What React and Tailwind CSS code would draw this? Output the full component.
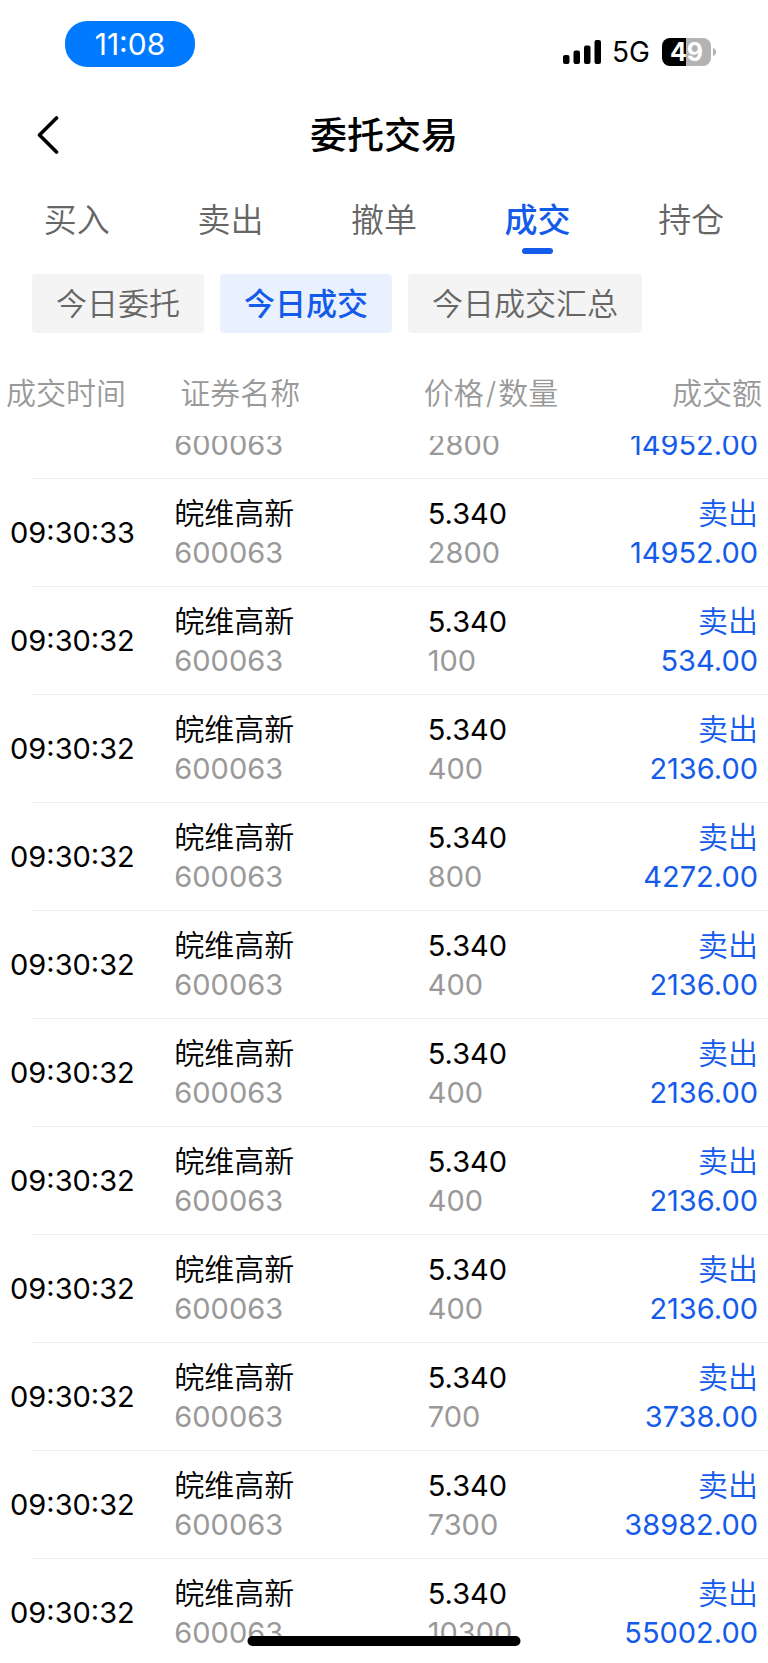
import React from "react";

const tabs = ["买入", "卖出", "撤单", "成交", "持仓"];
const filters = ["今日委托", "今日成交", "今日成交汇总"];

const trades = [
  { time: "09:30:33", qty: "2800", amount: "14952.00" },
  { time: "09:30:32", qty: "100", amount: "534.00" },
  { time: "09:30:32", qty: "400", amount: "2136.00" },
  { time: "09:30:32", qty: "800", amount: "4272.00" },
  { time: "09:30:32", qty: "400", amount: "2136.00" },
  { time: "09:30:32", qty: "400", amount: "2136.00" },
  { time: "09:30:32", qty: "400", amount: "2136.00" },
  { time: "09:30:32", qty: "400", amount: "2136.00" },
  { time: "09:30:32", qty: "700", amount: "3738.00" },
  { time: "09:30:32", qty: "7300", amount: "38982.00" },
  { time: "09:30:32", qty: "10300", amount: "55002.00" },
];

function StatusBar() {
  return (
    <div className="flex h-[88px] shrink-0 items-start justify-between pt-[21px] pr-[52px] pl-[65px]">
      <div className="flex h-[46px] w-[130px] items-center justify-center rounded-[22px] bg-[#007aff] text-[30px] text-white">
        11:08
      </div>
      <div className="flex h-[62px] items-center">
        <svg className="h-6 w-[39px]" viewBox="0 0 39 24" aria-hidden="true">
          <rect x="0" y="15" width="6.5" height="9" rx="2" />
          <rect x="10.5" y="10.5" width="6.5" height="13.5" rx="2" />
          <rect x="21" y="5.500" width="6.5" height="18.5" rx="2" />
          <rect x="31.5" y="0" width="6.5" height="24" rx="2" />
        </svg>
        <span className="ml-2.5 text-[28px] leading-7">5G</span>
        <div className="ml-3 flex h-7 w-[49px] items-center justify-center rounded-lg bg-linear-to-r from-black from-50% to-[#b3b3b3] to-50% text-[25px] leading-7 font-bold text-white">
          49
        </div>
        <svg className="ml-0.5 h-2 w-[3px]" viewBox="0 0 3 8" aria-hidden="true">
          <path d="M0 0C4 1 4 7 0 8Z" fill="#b3b3b3" />
        </svg>
      </div>
    </div>
  );
}

function TitleBar() {
  return (
    <header className="grid h-24 shrink-0 grid-cols-[1fr_auto_1fr] items-center">
      <button type="button" aria-label="返回" className="ml-9 w-6">
        <svg className="h-10 w-6" viewBox="0 0 24 40" fill="none" stroke="#000" strokeWidth="3.6" strokeLinecap="round" strokeLinejoin="round">
          <path d="M20.500 2L3.500 19L20.500 36" />
        </svg>
      </button>
      <h1 className="text-[37px] leading-10 font-medium">委托交易</h1>
    </header>
  );
}

function TradeRow({ trade }) {
  return (
    <tr className="h-[108px]">
      <td className="relative pl-2.5 after:absolute after:right-0 after:bottom-0 after:left-8 after:h-px after:bg-[#f0f0f0]">
        {trade.time}
      </td>
      <td className="border-b border-[#f0f0f0]">
        <div className="text-[30px] leading-[39px] font-[350]">皖维高新</div>
        <div className="leading-[39px] text-[#999]">600063</div>
      </td>
      <td className="border-b border-[#f0f0f0]">
        <div className="leading-[39px]">5.340</div>
        <div className="leading-[39px] text-[#999]">{trade.qty}</div>
      </td>
      <td className="border-b border-[#f0f0f0] pr-2.5 text-right text-[#155bea]">
        <div className="text-[30px] leading-[39px] font-[350]">卖出</div>
        <div className="leading-[39px]">{trade.amount}</div>
      </td>
    </tr>
  );
}

function ClippedCell({ className, children }) {
  return (
    <td className={className}>
      <div className="flex h-[42px] flex-col justify-end overflow-hidden pb-[14px]">
        <span className="leading-[39px]">{children}</span>
      </div>
    </td>
  );
}

function TradeTable() {
  return (
    <table className="w-full table-fixed text-left text-[29px]">
      <colgroup>
        <col className="w-[22.7%]" />
        <col className="w-[33%]" />
        <col className="w-[22%]" />
        <col className="w-[22.3%]" />
      </colgroup>
      <thead>
        <tr className="h-[86px] text-[30px] text-[#999]">
          <th scope="col" className="pl-1.5 font-[350]">成交时间</th>
          <th scope="col" className="pl-1.5 font-[350]">证券名称</th>
          <th scope="col" className="font-[350]">
            <div className="-ml-1">
              价格<span className="mx-0.5">/</span>数量
            </div>
          </th>
          <th scope="col" className="pr-1.5 text-right font-[350]">成交额</th>
        </tr>
      </thead>
      <tbody>
        <tr>
          <td className="relative after:absolute after:right-0 after:bottom-0 after:left-8 after:h-px after:bg-[#f0f0f0]" />
          <ClippedCell className="border-b border-[#f0f0f0] text-[#999]">600063</ClippedCell>
          <ClippedCell className="border-b border-[#f0f0f0] text-[#999]">2800</ClippedCell>
          <ClippedCell className="border-b border-[#f0f0f0] pr-2.5 text-right text-[#155bea]">14952.00</ClippedCell>
        </tr>
        {trades.map((trade, i) => (
          <TradeRow key={i} trade={trade} />
        ))}
      </tbody>
    </table>
  );
}

export default function App() {
  const [tab, setTab] = React.useState("成交");
  const [filter, setFilter] = React.useState("今日成交");

  return (
    <div className="flex h-screen flex-col overflow-hidden bg-white font-['Inter','Noto_Sans_CJK_SC',sans-serif] text-black">
      <StatusBar />
      <TitleBar />
      <nav className="grid shrink-0 grid-cols-5">
        {tabs.map((name) => (
          <button
            key={name}
            type="button"
            onClick={() => setTab(name)}
            className={
              "flex h-[70px] flex-col items-center justify-between pt-4 text-[33px] leading-10 " +
              (name === tab ? "font-medium text-[#155bea]" : "font-[350] text-[#666]")
            }
          >
            {name}
            {name === tab && <span className="h-1.5 w-[31px] rounded-full bg-[#155bea]" />}
          </button>
        ))}
      </nav>
      <div className="mt-5 mb-[17px] flex shrink-0 gap-4 px-8">
        {filters.map((name) => (
          <button
            key={name}
            type="button"
            onClick={() => setFilter(name)}
            className={
              "h-[59px] rounded px-6 pt-0.5 text-[31px] " +
              (name === filter ? "bg-[#eaf1fe] font-medium text-[#155bea]" : "bg-[#f4f4f4] font-[350] text-[#666]")
            }
          >
            {name}
          </button>
        ))}
      </div>
      <main className="min-h-0 flex-1 overflow-hidden">
        <TradeTable />
      </main>
      <div className="fixed bottom-[17px] left-1/2 h-2.5 w-[273px] -translate-x-1/2 rounded-full bg-black" />
    </div>
  );
}
